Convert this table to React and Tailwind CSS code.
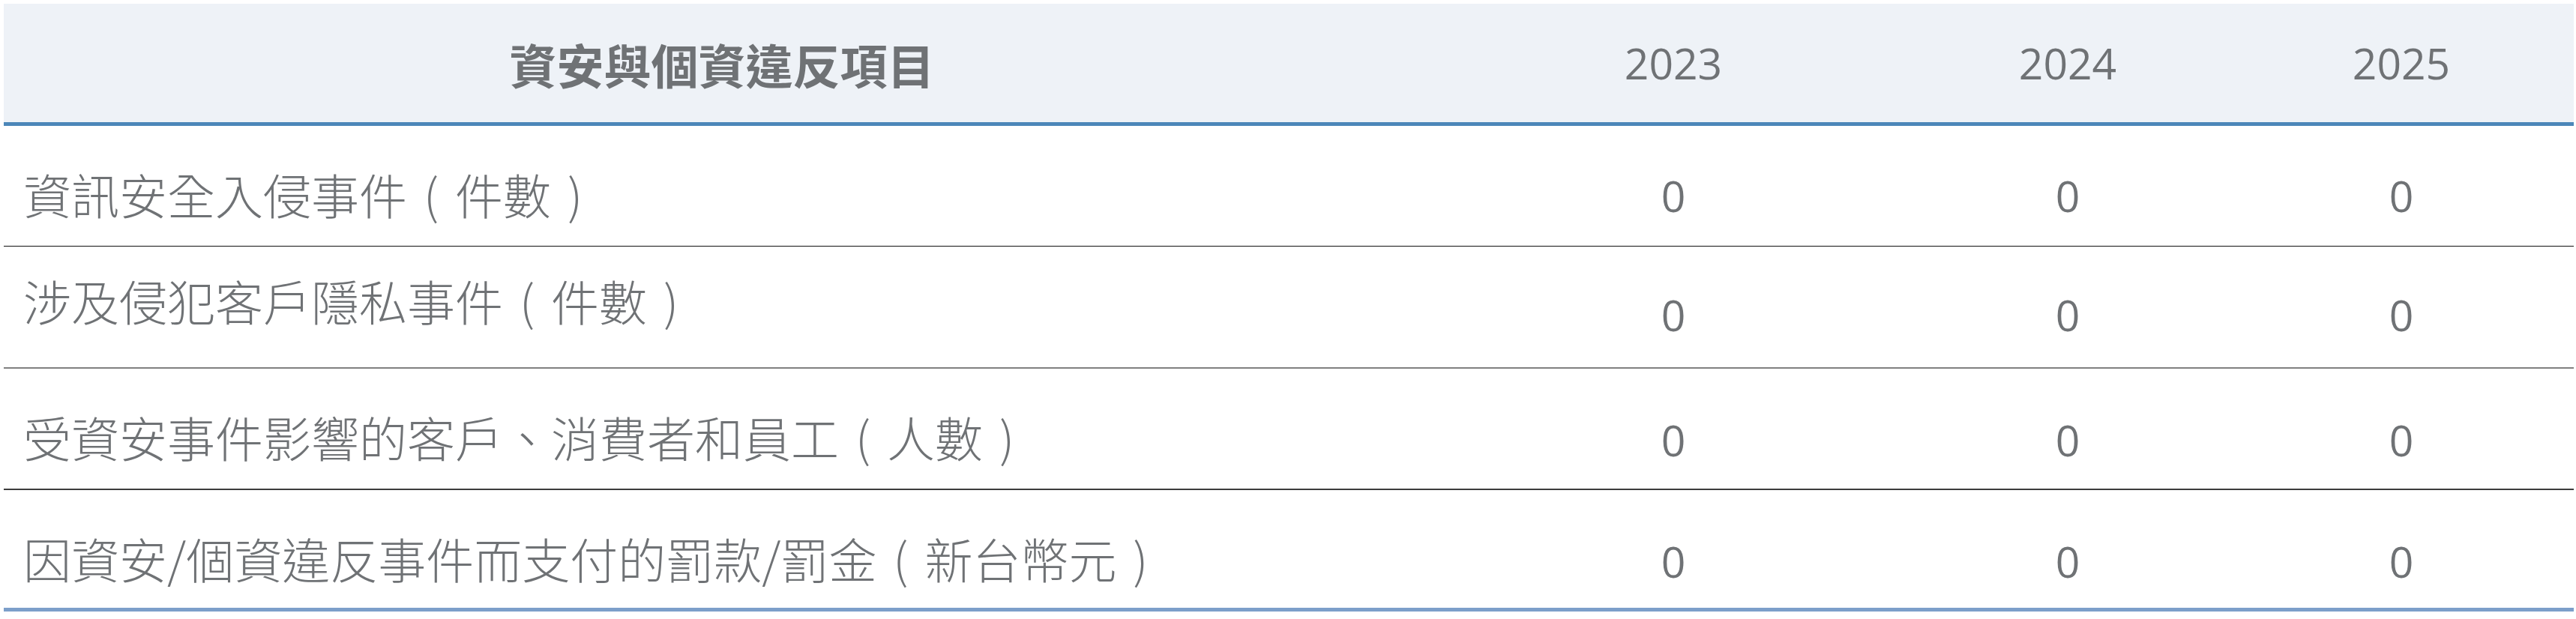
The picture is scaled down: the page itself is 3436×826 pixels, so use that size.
function Label({ text }) {
  const parts = text.split(/([（）])/);
  return (
    <>
      {parts.map((p, i) =>
        p === "（" || p === "）" ? (
          <span key={i} className="inline-block w-[1em] text-center">{p === "（" ? "(" : ")"}</span>
        ) : (
          <span key={i}>{p}</span>
        )
      )}
    </>
  );
}

export default function App() {
  const cjk = { fontFamily: '"Noto Sans CJK TC", "Noto Sans", sans-serif' };
  const num = { fontFamily: '"Open Sans", "Noto Sans", sans-serif' };
  const rows = [
    { label: "資訊安全入侵事件（件數）", h: "h-[161px]", border: "border-b border-[#111111]", lp: "pt-[20px]", np: "pt-[26px]" },
    { label: "涉及侵犯客戶隱私事件（件數）", h: "h-[163px]", border: "border-b-2 border-[#808080]", lp: "pb-[20px]", np: "pt-[22px]" },
    { label: "受資安事件影響的客戶、消費者和員工（人數）", h: "h-[162px]", border: "border-b-2 border-[#3c3c3c]", lp: "pt-[20px]", np: "pt-[30px]" },
    { label: "因資安/個資違反事件而支付的罰款/罰金（新台幣元）", h: "h-[162px]", border: "border-b-[5px] border-[#7c9fca]", lp: "pt-[22px]", np: "pt-[34px]" },
  ];
  return (
    <div className="w-[3436px] h-[826px] bg-white pt-[5px] pl-[5px]">
      <div className="w-[3428px] text-[#6f7275]">
        <div className="grid grid-cols-[1916px_622px_430px_460px] h-[163px] bg-[#eef2f7] border-b-[5px] border-[#4c87b9]">
          <div className="flex items-center justify-center text-[63px] font-bold leading-none" style={cjk}>資安與個資違反項目</div>
          {["2023", "2024", "2025"].map((y) => (
            <div key={y} className="flex items-center justify-center text-[57px] leading-none" style={num}>{y}</div>
          ))}
        </div>
        {rows.map((r, i) => (
          <div key={i} className={`grid grid-cols-[1916px_622px_430px_460px] ${r.h} ${r.border}`}>
            <div className={`flex items-center pl-[26px] text-[64px] font-light leading-none whitespace-nowrap ${r.lp}`} style={cjk}>
              <span><Label text={r.label} /></span>
            </div>
            {[0, 1, 2].map((k) => (
              <div key={k} className={`flex items-center justify-center text-[57px] leading-none ${r.np}`} style={num}>0</div>
            ))}
          </div>
        ))}
      </div>
    </div>
  );
}
